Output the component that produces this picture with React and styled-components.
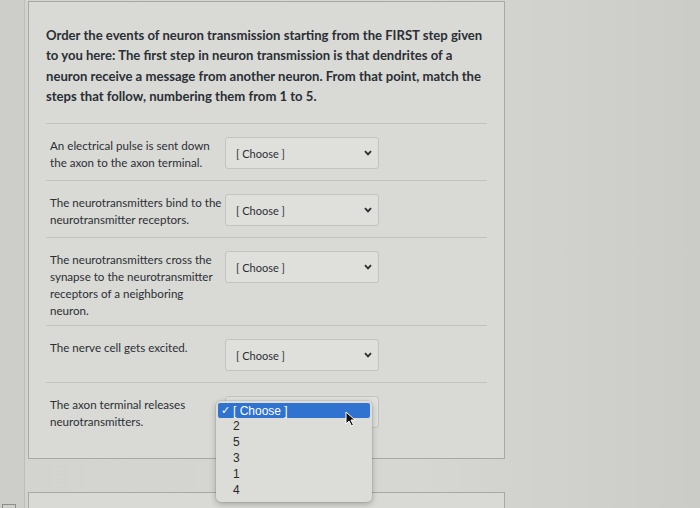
import React from 'react';
import styled, { createGlobalStyle } from 'styled-components';

const GlobalStyle = createGlobalStyle`
  html, body {
    margin: 0;
    padding: 0;
    background: #d1d1cd;
    font-family: Lato, "Open Sans", sans-serif;
    color: #2b3036;
  }
`;

const Page = styled.div`
  display: flex;
  width: 700px;
  height: 508px;
  overflow: hidden;
  background: linear-gradient(90deg, #d3d3cf 0%, #d6d6d2 60%, #cbcbc7 100%);
`;

const Gutter = styled.div`
  width: 24px;
  flex: none;
  border-right: 1px solid #bdbdb9;
  background: #cdcdc9;
  position: relative;
`;

const GutterBox = styled.div`
  position: absolute;
  left: 2px;
  top: 504px;
  width: 12px;
  height: 10px;
  border: 1px solid #8d8d8a;
`;

const Column = styled.div`
  padding: 1px 0 0 3px;
  display: flex;
  flex-direction: column;
  gap: 33px;
`;

const Card = styled.div`
  flex: none;
  width: 477px;
  border: 1px solid #a8a8a4;
  background: #d9d9d5;
  padding: 0 17px;
  box-sizing: border-box;
  min-height: ${(p) => p.minHeight || 0}px;
`;

const Question = styled.p`
  margin: 0;
  padding: 23px 0 17px;
  font-size: 13.1px;
  font-weight: 700;
  line-height: 20.3px;
  color: #2a2f35;
  border-bottom: 1px solid #c2c2be;
`;

const Row = styled.div`
  display: grid;
  grid-template-columns: 175px 154px;
  align-items: start;
  padding: 13px 0 6px 4px;
  box-sizing: border-box;
  border-bottom: ${(p) => (p.last ? 'none' : '1px solid #c2c2be')};
  min-height: ${(p) => (p.last ? '75px' : '57px')};
`;

const Prompt = styled.div`
  font-size: 11.6px;
  line-height: 17px;
  color: #2b3036;
  padding-right: 3px;
`;

const SelectWrap = styled.div`
  position: relative;
`;

const Select = styled.div`
  height: 32px;
  box-sizing: border-box;
  border: 1px solid #c3c3bf;
  border-radius: 3px;
  background: #dfdfdb;
  display: flex;
  align-items: center;
  justify-content: space-between;
  padding: 0 6px 0 10px;
  font-size: 11px;
  color: #2b3036;
`;

const Chevron = () => (
  <svg width="8" height="6" viewBox="0 0 8 6">
    <polyline points="1,1.2 4,4.4 7,1.2" fill="none" stroke="#2a2e33" strokeWidth="1.8" />
  </svg>
);

const Menu = styled.div`
  position: absolute;
  left: -9px;
  top: 5px;
  width: 156px;
  padding: 2px 2px 4px;
  box-sizing: border-box;
  background: #dcdcd8;
  border-radius: 5px;
  box-shadow: 0 2px 6px rgba(0, 0, 0, 0.25), 0 0 0 1px rgba(0, 0, 0, 0.06);
  font-family: "Liberation Sans", Arial, sans-serif;
  font-size: 12px;
  z-index: 2;
`;

const Option = styled.div`
  display: flex;
  align-items: center;
  height: ${(p) => (p.active ? '15px' : '16px')};
  padding-left: 15px;
  color: ${(p) => (p.active ? '#ffffff' : '#2a2a2a')};
  background: ${(p) => (p.active ? '#2f72cf' : 'transparent')};
  border-radius: 2px;
  position: relative;
`;

const Check = styled.span`
  position: absolute;
  left: 3px;
  font-size: 11px;
`;

const Cursor = () => (
  <svg
    width="12"
    height="16"
    viewBox="0 0 12 16"
    style={{ position: 'absolute', left: 129, top: 10 }}
  >
    <path d="M1 1 L1 13 L4 10 L6.5 15 L8.5 14 L6 9 L10 9 Z" fill="#111" stroke="#fff" strokeWidth="1" />
  </svg>
);

const steps = [
  { text: 'An electrical pulse is sent down the axon to the axon terminal.' },
  { text: 'The neurotransmitters bind to the neurotransmitter receptors.' },
  { text: 'The neurotransmitters cross the synapse to the neurotransmitter receptors of a neighboring neuron.' },
  { text: 'The nerve cell gets excited.' },
  { text: 'The axon terminal releases neurotransmitters.', open: true },
];

const options = ['2', '5', '3', '1', '4'];

const App = () => (
  <>
    <GlobalStyle />
    <Page>
      <Gutter>
        <GutterBox />
      </Gutter>
      <Column>
        <Card>
          <Question>
            Order the events of neuron transmission starting from the FIRST step given
            to you here: The first step in neuron transmission is that dendrites of a
            neuron receive a message from another neuron. From that point, match the
            steps that follow, numbering them from 1 to 5.
          </Question>
          {steps.map((step, i) => (
            <Row key={step.text} last={i === steps.length - 1}>
              <Prompt>{step.text}</Prompt>
              <SelectWrap>
                <Select>
                  <span>[ Choose ]</span>
                  <Chevron />
                </Select>
                {step.open && (
                  <Menu>
                    <Option active>
                      <Check>✓</Check>[ Choose ]
                    </Option>
                    {options.map((o) => (
                      <Option key={o}>{o}</Option>
                    ))}
                    <Cursor />
                  </Menu>
                )}
              </SelectWrap>
            </Row>
          ))}
        </Card>
        <Card minHeight={40} />
      </Column>
    </Page>
  </>
);

export default App;
